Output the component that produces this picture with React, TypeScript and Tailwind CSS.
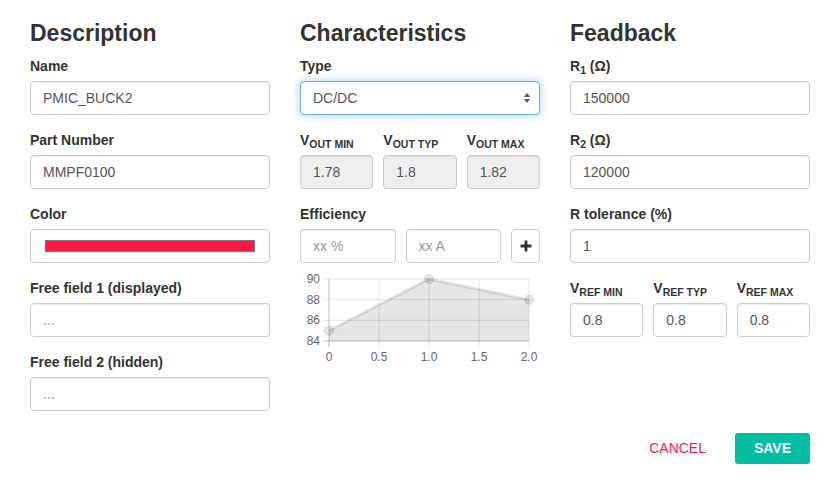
import type { ReactNode } from "react";

const font = { fontFamily: '"Liberation Sans", Arial, sans-serif' };

function Label({ children }: { children: ReactNode }) {
  return <div className="mb-[5px] h-[20px] text-[14px] font-bold leading-[20px] text-[#333]">{children}</div>;
}

function Field({ value, placeholder, disabled }: { value?: string; placeholder?: string; disabled?: boolean }) {
  return (
    <div
      className={`flex h-[34px] items-center rounded-[4px] border border-[#ccc] px-[12px] text-[14px] shadow-[inset_0_1px_1px_rgba(0,0,0,0.075)] ${
        disabled ? "bg-[#eee]" : "bg-white"
      } ${value ? "text-[#555]" : "text-[#999]"}`}
    >
      {value ?? placeholder}
    </div>
  );
}

function Group({ label, children }: { label: ReactNode; children: ReactNode }) {
  return (
    <div className="mb-[15px]">
      <Label>{label}</Label>
      {children}
    </div>
  );
}

function Sub({ main, sub }: { main: string; sub: string }) {
  return (
    <span>
      {main}
      <span className="relative top-[3px] text-[10.5px] uppercase">{sub}</span>
    </span>
  );
}

function Heading({ children }: { children: ReactNode }) {
  return <h3 className="mb-[10px] mt-[20px] text-[23px] font-bold leading-[26px] text-[#333]">{children}</h3>;
}

function EfficiencyChart() {
  const xs = [29, 79, 129, 179, 229];
  const ys = [
    { y: 11, l: "90" },
    { y: 31.7, l: "88" },
    { y: 52.3, l: "86" },
    { y: 73, l: "84" },
  ];
  const pts = [
    [29, 62.7],
    [129, 11],
    [229, 31.7],
  ];
  return (
    <svg width="240" height="100" className="mt-[5px] block" style={{ fontFamily: '"Liberation Sans", Arial, sans-serif' }}>
      {xs.map((x, i) => (
        <line key={x} x1={x} y1={11} x2={x} y2={79} stroke={i === 0 ? "rgba(0,0,0,0.25)" : "rgba(0,0,0,0.1)"} strokeWidth={1} />
      ))}
      {ys.map((g, i) => (
        <line key={g.l} x1={23} y1={g.y} x2={229} y2={g.y} stroke={i === 3 ? "rgba(0,0,0,0.25)" : "rgba(0,0,0,0.1)"} strokeWidth={1} />
      ))}
      <polygon points={`29,73 ${pts.map((p) => p.join(",")).join(" ")} 229,73`} fill="rgba(0,0,0,0.1)" />
      <polyline points={pts.map((p) => p.join(",")).join(" ")} fill="none" stroke="rgba(0,0,0,0.1)" strokeWidth={3} />
      {pts.map((p) => (
        <circle key={p[0]} cx={p[0]} cy={p[1]} r={4.5} fill="rgba(0,0,0,0.1)" stroke="rgba(0,0,0,0.1)" strokeWidth={1} />
      ))}
      {ys.map((g) => (
        <text key={g.l} x={20} y={g.y + 4} textAnchor="end" fontSize="12" fill="#666">
          {g.l}
        </text>
      ))}
      {["0", "0.5", "1.0", "1.5", "2.0"].map((l, i) => (
        <text key={l} x={xs[i]} y={93} textAnchor="middle" fontSize="12" fill="#666">
          {l}
        </text>
      ))}
    </svg>
  );
}

export default function App() {
  return (
    <div className="h-[485px] w-[840px] bg-white px-[30px]" style={font}>
      <div className="grid grid-cols-3 gap-[30px]">
        <div>
          <Heading>Description</Heading>
          <Group label="Name">
            <Field value="PMIC_BUCK2" />
          </Group>
          <Group label="Part Number">
            <Field value="MMPF0100" />
          </Group>
          <Group label="Color">
            <div className="flex h-[34px] items-center rounded-[4px] border border-[#ccc] bg-white px-[14px]">
              <div className="h-[12px] w-full border border-[#777] bg-[#ff1744]" />
            </div>
          </Group>
          <Group label="Free field 1 (displayed)">
            <Field placeholder="..." />
          </Group>
          <Group label="Free field 2 (hidden)">
            <Field placeholder="..." />
          </Group>
        </div>

        <div>
          <Heading>Characteristics</Heading>
          <Group label="Type">
            <div className="flex h-[34px] items-center justify-between rounded-[4px] border border-[#66afe9] bg-white pl-[12px] pr-[8px] text-[14px] text-[#555] shadow-[inset_0_1px_1px_rgba(0,0,0,0.075),0_0_8px_rgba(102,175,233,0.6)]">
              <span>DC/DC</span>
              <svg width="8" height="12" viewBox="0 0 8 12">
                <path d="M4 1 L7 5 L1 5 Z" fill="#555" />
                <path d="M4 11 L7 7 L1 7 Z" fill="#555" />
              </svg>
            </div>
          </Group>
          <div className="mb-[15px] grid grid-cols-3 gap-[10px]">
            <div>
              <Label>
                <Sub main="V" sub="out min" />
              </Label>
              <Field value="1.78" disabled />
            </div>
            <div>
              <Label>
                <Sub main="V" sub="out typ" />
              </Label>
              <Field value="1.8" disabled />
            </div>
            <div>
              <Label>
                <Sub main="V" sub="out max" />
              </Label>
              <Field value="1.82" disabled />
            </div>
          </div>
          <div>
            <Label>Efficiency</Label>
            <div className="flex gap-[10px]">
              <div className="flex-1">
                <Field placeholder="xx %" />
              </div>
              <div className="flex-1">
                <Field placeholder="xx A" />
              </div>
              <div className="flex h-[34px] w-[29px] items-center justify-center rounded-[4px] border border-[#ccc] bg-white">
                <svg width="12" height="12" viewBox="0 0 12 12">
                  <path d="M4.6 0.5h2.8v4.1h4.1v2.8H7.4v4.1H4.6V7.4H0.5V4.6h4.1z" fill="#333" />
                </svg>
              </div>
            </div>
            <EfficiencyChart />
          </div>
        </div>

        <div>
          <Heading>Feadback</Heading>
          <Group
            label={
              <span>
                R<span className="relative top-[3px] text-[10.5px]">1</span> (Ω)
              </span>
            }
          >
            <Field value="150000" />
          </Group>
          <Group
            label={
              <span>
                R<span className="relative top-[3px] text-[10.5px]">2</span> (Ω)
              </span>
            }
          >
            <Field value="120000" />
          </Group>
          <Group label="R tolerance (%)">
            <Field value="1" />
          </Group>
          <div className="mb-[15px] grid grid-cols-3 gap-[10px]">
            <div>
              <Label>
                <Sub main="V" sub="ref min" />
              </Label>
              <Field value="0.8" />
            </div>
            <div>
              <Label>
                <Sub main="V" sub="ref typ" />
              </Label>
              <Field value="0.8" />
            </div>
            <div>
              <Label>
                <Sub main="V" sub="ref max" />
              </Label>
              <Field value="0.8" />
            </div>
          </div>
        </div>
      </div>

      <div className="mt-[7px] flex items-center justify-end">
        <button className="mr-[29px] text-[14px] uppercase text-[#ff1744]">Cancel</button>
        <button className="h-[31px] w-[75px] rounded-[3px] bg-[#00bfa5] text-[14px] font-bold uppercase text-white">Save</button>
      </div>
    </div>
  );
}
